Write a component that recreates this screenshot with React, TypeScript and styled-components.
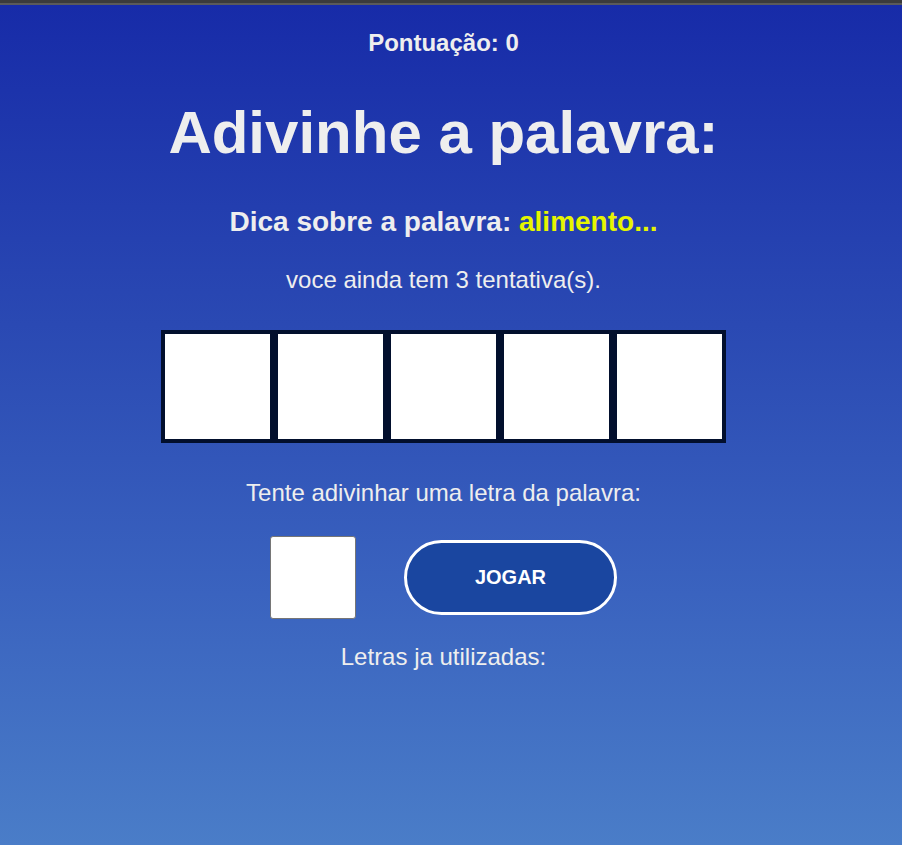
import styled, { createGlobalStyle } from "styled-components";

const GlobalStyle = createGlobalStyle`
  html, body {
    margin: 0;
    padding: 0;
  }
  body {
    font-family: "Liberation Sans", Arial, sans-serif;
    background: #4a7dc8;
  }
`;

const TopBar = styled.div`
  height: 3px;
  background: #3b3b3b;
  border-bottom: 2px solid #5a5a5a;
`;

const Page = styled.main`
  min-height: calc(100vh - 5px);
  box-sizing: border-box;
  padding: 24px 15px 40px 0;
  background: linear-gradient(180deg, #172ba8 0%, #2a49b3 38%, #3a63bf 70%, #4a7dc8 100%);
  display: flex;
  flex-direction: column;
  align-items: center;
  color: #eeeeee;
  line-height: 1.15;
`;

const Score = styled.div`
  font-size: 24px;
  font-weight: bold;
`;

const Title = styled.h1`
  margin: 41px 0 0;
  font-size: 60px;
  font-weight: bold;
  line-height: 1.15;
`;

const Hint = styled.h2`
  margin: 39px 0 0;
  font-size: 28px;
  font-weight: bold;
  line-height: 1.15;
`;

const HintWord = styled.span`
  color: #e6f500;
`;

const Text = styled.p<{ $top: number }>`
  margin: ${(p) => p.$top}px 0 0;
  font-size: 24px;
`;

const Slots = styled.div`
  margin-top: 37px;
  display: flex;
`;

const Slot = styled.div`
  width: 105px;
  height: 105px;
  background: #ffffff;
  border: 4px solid #020f2d;
`;

const GuessRow = styled.div`
  margin-top: 29px;
  display: flex;
  align-items: center;
  gap: 48px;
`;

const LetterInput = styled.input`
  width: 86px;
  height: 83px;
  box-sizing: border-box;
  border: 1px solid #767676;
  border-radius: 3px;
  background: #ffffff;
  font-family: inherit;
  font-size: 40px;
  text-align: center;
  outline: none;
`;

const PlayButton = styled.button`
  width: 213px;
  height: 75px;
  box-sizing: border-box;
  border: 3px solid #ffffff;
  border-radius: 40px;
  background: #1a46a0;
  color: #ffffff;
  font-family: inherit;
  font-size: 20px;
  font-weight: bold;
  cursor: pointer;
`;

const App = () => {
  return (
    <>
      <GlobalStyle />
      <TopBar />
      <Page>
        <Score>Pontuação: 0</Score>
        <Title>Adivinhe a palavra:</Title>
        <Hint>
          Dica sobre a palavra: <HintWord>alimento...</HintWord>
        </Hint>
        <Text $top={28}>voce ainda tem 3 tentativa(s).</Text>
        <Slots>
          {Array.from({ length: 5 }).map((_, i) => (
            <Slot key={i} />
          ))}
        </Slots>
        <Text $top={36}>Tente adivinhar uma letra da palavra:</Text>
        <GuessRow>
          <LetterInput maxLength={1} />
          <PlayButton>JOGAR</PlayButton>
        </GuessRow>
        <Text $top={24}>Letras ja utilizadas:</Text>
      </Page>
    </>
  );
};

export default App;
